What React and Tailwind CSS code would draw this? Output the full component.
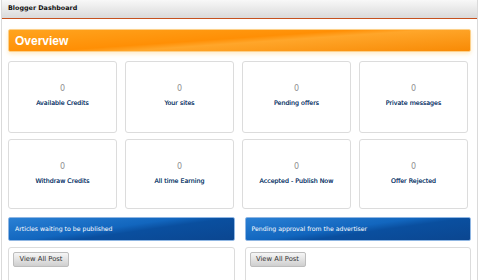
export default function App() {
  const row1 = ["Available Credits", "Your sites", "Pending offers", "Private messages"];
  const row2 = ["Withdraw Credits", "All time Earning", "Accepted - Publish Now", "Offer Rejected"];
  const Card = ({ label, h }) => (
    <div className={`${h} bg-white border border-[#dcdcdc] rounded-[3px] flex flex-col items-center`}>
      <div className="mt-[22px] text-[8px] leading-[10px] text-[#909090]">0</div>
      <div className="mt-[4px] text-[6.3px] leading-[9px] text-[#1f4370] [text-shadow:0_0_0.4px_#1f4370]">{label}</div>
    </div>
  );
  const Section = ({ title }) => (
    <div className="flex flex-col">
      <div className="h-[24px] rounded-[2px] border border-[#8fb6e3] bg-[linear-gradient(172deg,#2a80d4_0%,#1266be_45%,#0a4f9f_58%,#0b4690_100%)] flex items-center pl-[6px] text-white text-[6.2px]">
        {title}
      </div>
      <div className="mt-[6px] h-[40px] border border-[#dcdcdc] rounded-[3px] bg-white pt-[4px] pl-[4px]">
        <button className="h-[15px] w-[56px] border border-[#bdbdbd] rounded-[2px] bg-gradient-to-b from-[#f6f6f6] to-[#cfcfcf] text-[6.8px] text-[#333] flex items-center justify-center">
          View All Post
        </button>
      </div>
    </div>
  );
  return (
    <div className="w-[480px] h-[280px] overflow-hidden bg-white font-['DejaVu_Sans',sans-serif]">
      <div className="ml-px w-[477px] h-full border-x border-[#dadada]">
        <div className="h-[19px] border-b border-[#c5511f] bg-gradient-to-b from-[#f8f8f8] to-[#dadada] flex items-center pl-[6px] text-[6.4px] font-bold text-[#111]">
          Blogger Dashboard
        </div>
        <div className="px-[6px] pt-[10px]">
          <div className="w-[463px] h-[23px] rounded-[2px] border border-[#fcd08a] bg-[linear-gradient(176deg,#ffa41f_0%,#ff8f05_45%,#ffa62a_55%,#f88a05_100%)] shadow-[0_2px_4px_rgba(255,200,100,0.35)] flex items-center pl-[6px] text-white text-[12px] font-bold font-['Liberation_Sans',sans-serif]">
            Overview
          </div>
          <div className="mt-[9px] w-[460px] grid grid-cols-4 gap-x-[8px] gap-y-[6px]">
            {row1.map((l) => <Card key={l} label={l} h="h-[72px]" />)}
            {row2.map((l) => <Card key={l} label={l} h="h-[70px]" />)}
          </div>
          <div className="mt-[8px] w-[463px] grid grid-cols-2 gap-x-[10px]">
            <Section title="Articles waiting to be published" />
            <Section title="Pending approval from the advertiser" />
          </div>
        </div>
      </div>
    </div>
  );
}
